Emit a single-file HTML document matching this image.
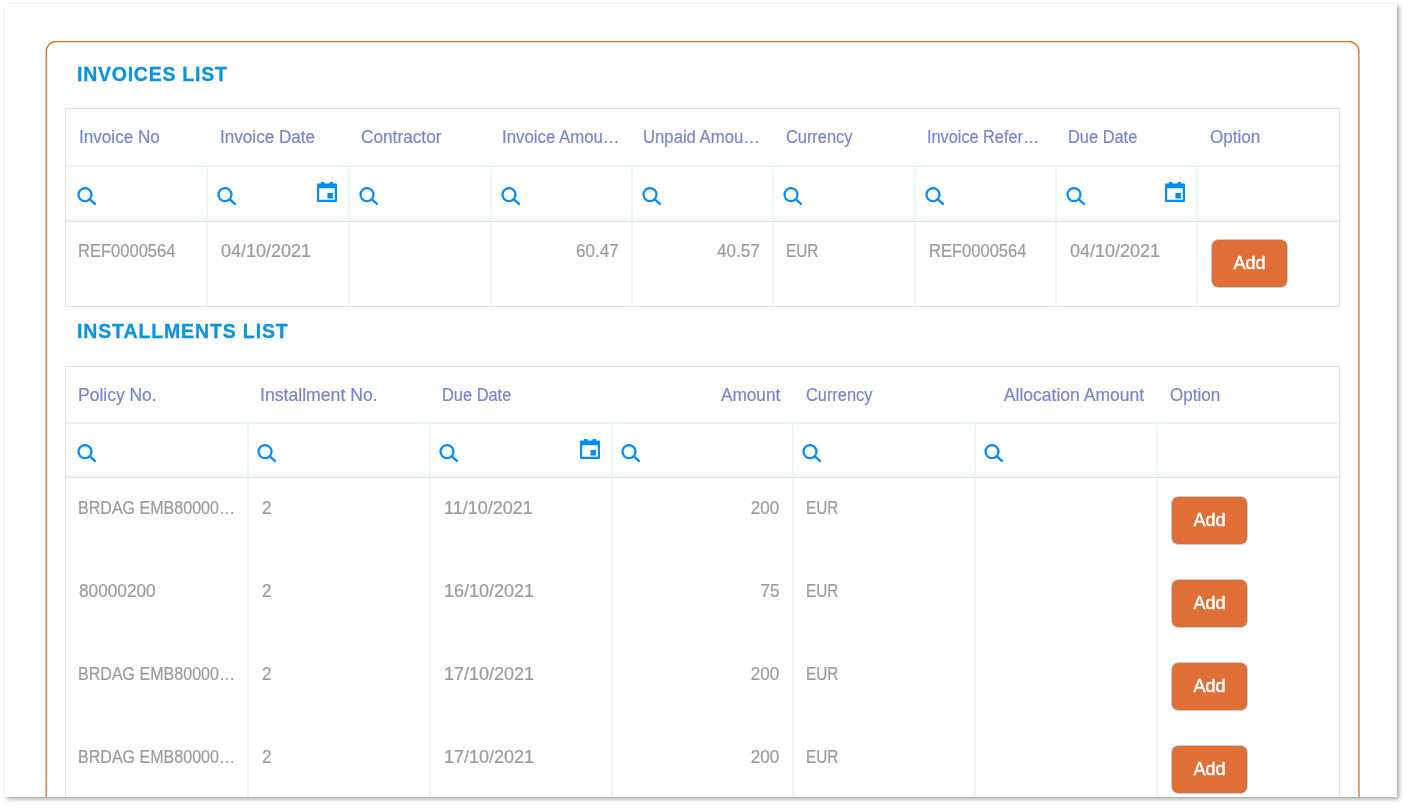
<!DOCTYPE html>
<html lang="en">
<head>
<meta charset="utf-8">
<title>Invoices and Installments</title>
<style>
  html, body { margin: 0; padding: 0; background: #fff; }
  body { width: 1409px; height: 808px; overflow: hidden; position: relative;
         font-family: "Liberation Sans", sans-serif; font-size: 17.5px; }
  .page { position: absolute; left: 5px; top: 4px; width: 1392px; height: 793px;
          background: #fff; overflow: hidden;
          box-shadow: 2px 2px 4px rgba(0,0,0,0.36), 0 0 2px rgba(0,0,0,0.035); }
  .panel { position: absolute; left: 42px; top: 39px; width: 1313px; height: 800px; will-change: transform; }
  .frame { position: absolute; left: -2px; top: -2px; width: 1318px; height: 800px; }
  .title { position: absolute; margin: 0; left: 30px; font-size: 19.5px; line-height: 20px;
           font-weight: bold; color: #0a94e0; letter-spacing: 0.8px; white-space: nowrap;
           -webkit-text-stroke: 0.3px #0a94e0; }
  .grid { position: absolute; left: 18px; width: 1275px; box-sizing: border-box;
          border: 1px solid #e0e0e0; }
  .row { display: flex; box-sizing: border-box; }
  .cell { flex: 0 0 auto; min-width: 0; position: relative; box-sizing: border-box;
          white-space: nowrap; overflow: hidden; }
  #g1 .cell { width: 141px; }
  #g1 .cell:nth-child(1), #g1 .cell:nth-child(2), #g1 .cell:nth-child(3), #g1 .cell:nth-child(6) { width: 142px; }
  #g2 .cell { width: 182px; }
  #g2 .cell:nth-child(1) { width: 183px; }
  #g2 .cell:nth-child(4), #g2 .cell:nth-child(7) { width: 181px; }
  .head { border-bottom: 2px solid #ebf5f8; color: #7986cb; }
  .head .cell { padding: 0 14px 0 11px; }
  .filter { border-bottom: 2px solid #eef7fa; }
  .filter .cell, .data .cell { border-right: 2px solid #ecf6f9; }
  .filter .cell:last-child, .data .cell:last-child { border-right: 0; }
  .filter + .data { border-top: 1px solid #e1e2e2; }
  .data { color: #9b9b9b; }
  .data .cell { padding: 0 14px 0 11px; }
  .cell:first-child { padding-left: 12px; }
  .cell span { display: inline-block; transform-origin: 0 50%; -webkit-text-stroke: 0.2px currentColor; }
  .r span { transform-origin: 100% 50%; }
  .n { margin-left: 1.5px; }
  .r { text-align: right; }
  .data .r { padding-right: 12.5px; }
  .ico-s { position: absolute; left: 9px; top: 19.7px; width: 20px; height: 20px; }
  .cell:first-child .ico-s { left: 11px; }
  .ico-c { position: absolute; right: 11px; top: 15px; width: 20px; height: 20px; }
  .btn { position: absolute; left: 13px; width: 77px; height: 49px; box-sizing: border-box;
         border: 1px solid #bfd4dc; border-radius: 7px; background: #e06f37; background-clip: padding-box;
         box-shadow: inset 0 0 0 1px #e66a2c;
         color: #fff; font: inherit; font-size: 18px; line-height: 47px; text-align: center;
         padding: 0; -webkit-text-stroke: 0.5px #fff; }
  #g1 { top: 65px; }
  #g1 .head { height: 58px; }
  #g1 .head .cell { line-height: 56px; }
  #g1 .filter { height: 54px; }
  #g1 .data { height: 85px; }
  #g1 .data .cell { line-height: 58px; }
  #g1 .btn { top: 17px; }
  #g2 { top: 323px; }
  #g2 .cell:not(:first-child) .ico-s { left: 8px; }
  #g2 .head { height: 57px; }
  #g2 .head .cell { line-height: 56px; }
  #g2 .filter { height: 53px; }
  #g2 .data { height: 82.85px; }
  #g2 .filter + .data { height: 83.85px; }
  #g2 .data .cell { line-height: 61px; }
  #g2 .btn { top: 18.4px; }
  #t1 { top: 21px; letter-spacing: 0.75px; }
  #t2 { top: 278px; letter-spacing: 0.87px; }
</style>
</head>
<body>
<svg width="0" height="0" style="position:absolute">
  <defs>
    <symbol id="s" viewBox="0 0 20 20">
      <circle cx="8" cy="7.6" r="6.5" fill="none" stroke="#048dfa" stroke-width="2.3"/>
      <path d="M12.6 12.2 L17.9 16.9" stroke="#048dfa" stroke-width="2.4" stroke-linecap="round" fill="none"/>
    </symbol>
    <symbol id="c" viewBox="0 0 20 20">
      <path fill="#048dfa" fill-rule="evenodd" d="M1 1.6h3V0h3.5v1.6h5V0H16v1.6h3a1 1 0 0 1 1 1V19a1 1 0 0 1-1 1H1a1 1 0 0 1-1-1V2.6a1 1 0 0 1 1-1zM2.2 6.2v11.6h15.6V6.2zM10.4 11h5.5v5.5h-5.5z"/>
    </symbol>
  </defs>
</svg>
<div class="page">
  <div class="panel">
    <svg class="frame" viewBox="0 0 1318 800"><rect x="1.2" y="0.5" width="1312.75" height="900" rx="10" ry="10" fill="none" stroke="#dc6e22" stroke-width="1.3"/></svg>
    <h2 class="title" id="t1">INVOICES LIST</h2>
    <div class="grid" id="g1">
      <div class="row head">
        <div class="cell"><span style="transform:scaleX(0.978);margin-left:.6px">Invoice No</span></div>
        <div class="cell"><span style="transform:scaleX(0.978);margin-left:.8px">Invoice Date</span></div>
        <div class="cell"><span style="transform:scaleX(0.985)">Contractor</span></div>
        <div class="cell"><span style="transform:scaleX(0.96);margin-left:-.6px">Invoice Amou…</span></div>
        <div class="cell"><span style="transform:scaleX(0.954);margin-left:-.7px">Unpaid Amou…</span></div>
        <div class="cell"><span style="transform:scaleX(0.935);margin-left:1px">Currency</span></div>
        <div class="cell"><span style="transform:scaleX(0.93);margin-left:-.5px">Invoice Refer…</span></div>
        <div class="cell"><span style="transform:scaleX(0.937)">Due Date</span></div>
        <div class="cell"><span style="transform:scaleX(0.975);margin-left:1px">Option</span></div>
      </div>
      <div class="row filter">
        <div class="cell"><svg class="ico-s"><use href="#s"/></svg></div>
        <div class="cell"><svg class="ico-s"><use href="#s"/></svg><svg class="ico-c"><use href="#c"/></svg></div>
        <div class="cell"><svg class="ico-s"><use href="#s"/></svg></div>
        <div class="cell"><svg class="ico-s"><use href="#s"/></svg></div>
        <div class="cell"><svg class="ico-s"><use href="#s"/></svg></div>
        <div class="cell"><svg class="ico-s"><use href="#s"/></svg></div>
        <div class="cell"><svg class="ico-s"><use href="#s"/></svg></div>
        <div class="cell"><svg class="ico-s"><use href="#s"/></svg><svg class="ico-c"><use href="#c"/></svg></div>
        <div class="cell"></div>
      </div>
      <div class="row data">
        <div class="cell"><span style="transform:scaleX(0.945)">REF0000564</span></div>
        <div class="cell"><span class="n" style="transform:scaleX(1.029)">04/10/2021</span></div>
        <div class="cell"></div>
        <div class="cell r"><span style="transform:scaleX(0.975)">60.47</span></div>
        <div class="cell r"><span style="transform:scaleX(0.975)">40.57</span></div>
        <div class="cell"><span style="transform:scaleX(0.875);margin-left:1px">EUR</span></div>
        <div class="cell"><span style="transform:scaleX(0.945);margin-left:1.5px">REF0000564</span></div>
        <div class="cell"><span class="n" style="transform:scaleX(1.029)">04/10/2021</span></div>
        <div class="cell"><button class="btn">Add</button></div>
      </div>
    </div>
    <h2 class="title" id="t2">INSTALLMENTS LIST</h2>
    <div class="grid" id="g2">
      <div class="row head">
        <div class="cell"><span style="transform:scaleX(0.999)">Policy No.</span></div>
        <div class="cell"><span style="transform:scaleX(1.008)">Installment No.</span></div>
        <div class="cell"><span style="transform:scaleX(0.937)">Due Date</span></div>
        <div class="cell r"><span style="transform:scaleX(0.985)">Amount</span></div>
        <div class="cell"><span style="transform:scaleX(0.935);margin-left:1px">Currency</span></div>
        <div class="cell r"><span style="transform:scaleX(1.001)">Allocation Amount</span></div>
        <div class="cell"><span style="transform:scaleX(0.975);margin-left:1px">Option</span></div>
      </div>
      <div class="row filter">
        <div class="cell"><svg class="ico-s"><use href="#s"/></svg></div>
        <div class="cell"><svg class="ico-s"><use href="#s"/></svg></div>
        <div class="cell"><svg class="ico-s"><use href="#s"/></svg><svg class="ico-c"><use href="#c"/></svg></div>
        <div class="cell"><svg class="ico-s"><use href="#s"/></svg></div>
        <div class="cell"><svg class="ico-s"><use href="#s"/></svg></div>
        <div class="cell"><svg class="ico-s"><use href="#s"/></svg></div>
        <div class="cell"></div>
      </div>
      <div class="row data first">
        <div class="cell"><span style="transform:scaleX(0.917)">BRDAG EMB80000…</span></div>
        <div class="cell"><span class="n" style="transform:scaleX(0.975)">2</span></div>
        <div class="cell"><span class="n" style="transform:scaleX(1.029)">11/10/2021</span></div>
        <div class="cell r"><span style="transform:scaleX(0.975)">200</span></div>
        <div class="cell"><span style="transform:scaleX(0.875);margin-left:1px">EUR</span></div>
        <div class="cell"></div>
        <div class="cell"><button class="btn">Add</button></div>
      </div>
      <div class="row data">
        <div class="cell"><span style="transform:scaleX(0.985);margin-left:.5px">80000200</span></div>
        <div class="cell"><span class="n" style="transform:scaleX(0.975)">2</span></div>
        <div class="cell"><span class="n" style="transform:scaleX(1.029)">16/10/2021</span></div>
        <div class="cell r"><span style="transform:scaleX(0.975)">75</span></div>
        <div class="cell"><span style="transform:scaleX(0.875);margin-left:1px">EUR</span></div>
        <div class="cell"></div>
        <div class="cell"><button class="btn">Add</button></div>
      </div>
      <div class="row data">
        <div class="cell"><span style="transform:scaleX(0.917)">BRDAG EMB80000…</span></div>
        <div class="cell"><span class="n" style="transform:scaleX(0.975)">2</span></div>
        <div class="cell"><span class="n" style="transform:scaleX(1.029)">17/10/2021</span></div>
        <div class="cell r"><span style="transform:scaleX(0.975)">200</span></div>
        <div class="cell"><span style="transform:scaleX(0.875);margin-left:1px">EUR</span></div>
        <div class="cell"></div>
        <div class="cell"><button class="btn">Add</button></div>
      </div>
      <div class="row data">
        <div class="cell"><span style="transform:scaleX(0.917)">BRDAG EMB80000…</span></div>
        <div class="cell"><span class="n" style="transform:scaleX(0.975)">2</span></div>
        <div class="cell"><span class="n" style="transform:scaleX(1.029)">17/10/2021</span></div>
        <div class="cell r"><span style="transform:scaleX(0.975)">200</span></div>
        <div class="cell"><span style="transform:scaleX(0.875);margin-left:1px">EUR</span></div>
        <div class="cell"></div>
        <div class="cell"><button class="btn">Add</button></div>
      </div>
    </div>
  </div>
</div>
</body>
</html>
